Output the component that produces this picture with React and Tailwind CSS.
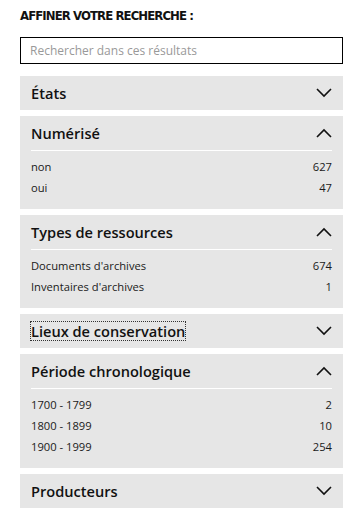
import React from 'react';

const Chevron = ({ up }) => (
  <svg width="16" height="10" viewBox="0 0 16 10" fill="none" className="shrink-0">
    <path
      d={up ? 'M1 9L8 2L15 9' : 'M1 1L8 8L15 1'}
      stroke="#111"
      strokeWidth="1.6"
    />
  </svg>
);

const facets = [
  { title: 'États', open: false },
  { title: 'Numérisé', open: true, items: [['non', 627], ['oui', 47]] },
  {
    title: 'Types de ressources',
    open: true,
    items: [["Documents d'archives", 674], ["Inventaires d'archives", 1]],
  },
  { title: 'Lieux de conservation', open: false, focused: true },
  {
    title: 'Période chronologique',
    open: true,
    items: [['1700 - 1799', 2], ['1800 - 1899', 10], ['1900 - 1999', 254]],
  },
  { title: 'Producteurs', open: false },
];

const Facet = ({ facet }) => (
  <div className="bg-[#e6e6e6] px-[11px]">
    <div className="h-[34px] flex items-center justify-between">
      <span
        className={
          'text-[14.6px] font-semibold text-[#111] leading-[18px] ' +
          (facet.focused ? 'outline outline-1 outline-dotted outline-[#333]' : '')
        }
      >
        {facet.title}
      </span>
      <Chevron up={facet.open} />
    </div>
    {facet.open && (
      <div className="border-t border-white pt-[6px] pb-[10px]">
        {facet.items.map(([label, count]) => (
          <div key={label} className="h-[21px] flex items-center justify-between text-[11.2px] text-[#1a1a1a]">
            <span>{label}</span>
            <span>{count}</span>
          </div>
        ))}
      </div>
    )}
  </div>
);

const App = () => {
  return (
    <div className="w-[358px] min-h-[525px] bg-white pl-[20px] pr-[15px] pt-[8px]" style={{ fontFamily: '"Open Sans", sans-serif' }}>
      <h2
        className="text-[13px] font-bold text-[#111] uppercase leading-[16px] tracking-[-0.9px]"
        style={{ fontFamily: '"DejaVu Sans Condensed", "DejaVu Sans", sans-serif' }}
      >
        Affiner votre recherche :
      </h2>
      <input
        type="text"
        placeholder="Rechercher dans ces résultats"
        className="mt-[13px] w-full h-[27px] border border-black px-[9px] text-[12px] placeholder:text-[#999] outline-none"
      />
      <div className="mt-[12px] flex flex-col gap-[6px]">
        {facets.map((f) => (
          <Facet key={f.title} facet={f} />
        ))}
      </div>
    </div>
  );
};

export default App;
